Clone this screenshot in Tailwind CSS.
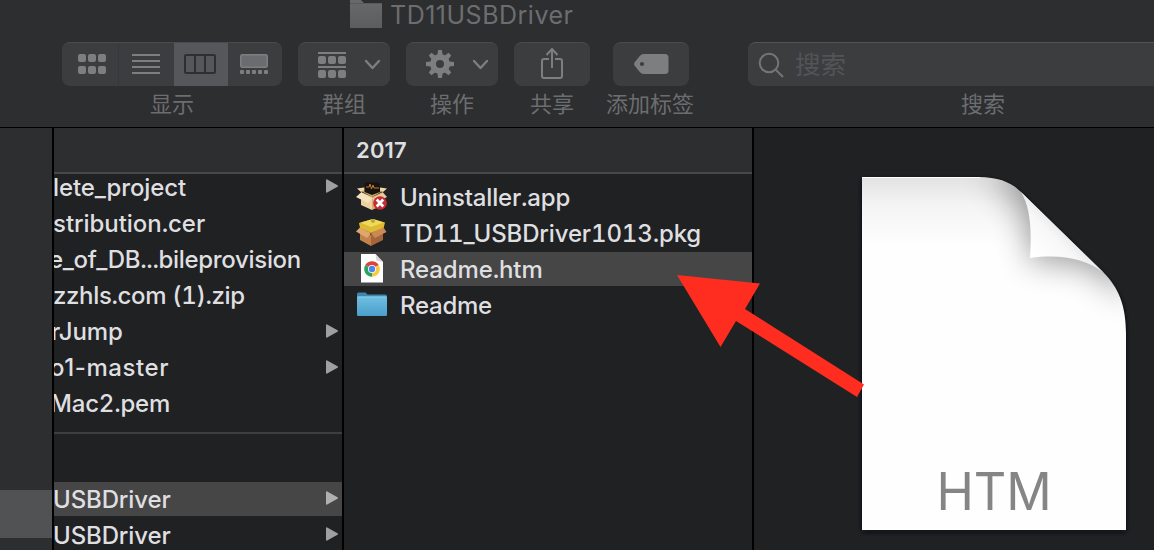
<!DOCTYPE html>
<html lang="zh-CN">
<head>
<meta charset="utf-8">
<title>TD11USBDriver</title>
<script src="https://cdn.jsdelivr.net/npm/@tailwindcss/browser@4"></script>
</head>
<body class="w-[1154px] h-[550px] overflow-hidden bg-[#202123] font-['Inter','Noto_Sans_CJK_SC',sans-serif]">
<div class="relative flex h-[550px] w-[1154px] flex-col overflow-hidden">

  <!-- Toolbar -->
  <header class="h-[128px] shrink-0 border-b border-black bg-[#2d2e30] text-[#6c6d6f]">
    <div class="flex h-[42px] items-start pl-[350px]">
      <svg class="h-[28px] w-[32px] shrink-0" viewBox="0 0 32 28"><defs><linearGradient id="tf" x1="0" y1="0" x2="0" y2="1"><stop offset="0" stop-color="#68696b"/><stop offset="1" stop-color="#5c5d5f"/></linearGradient></defs><path d="M0 0h11l3 3h18v25H0z" fill="url(#tf)"/><path d="M0 3.500h32" stroke="#58595b"/></svg>
      <h1 class="ml-[8px] -mt-px text-[25px] leading-[32px] tracking-[0.500px] whitespace-nowrap">TD11USBDriver</h1>
    </div>
    <div class="flex items-start">
      <div class="ml-[62px] w-[220px]">
        <div class="flex h-[44px] overflow-hidden rounded-[8px] border-t border-[#4a4b4d] bg-[#3c3d3f]">
          <div class="w-[57px] border-r border-[#36373a]"><svg class="h-[43px] w-[56px]" viewBox="0 0 56 43" fill="#7d7e80"><rect x="16" y="11" width="8" height="8" rx="2"/><rect x="26" y="11" width="8" height="8" rx="2"/><rect x="36" y="11" width="8" height="8" rx="2"/><rect x="16" y="23" width="8" height="8" rx="2"/><rect x="26" y="23" width="8" height="8" rx="2"/><rect x="36" y="23" width="8" height="8" rx="2"/></svg></div>
          <div class="w-[55px]"><svg class="h-[43px] w-[55px]" viewBox="0 0 55 43" fill="#7d7e80"><path d="M13 11h28v2H13zM13 17h28v2H13zM13 23h28v2H13zM13 29h28v2H13z"/></svg></div>
          <div class="w-[54px] bg-[#56575a]"><svg class="h-[43px] w-[54px]" viewBox="0 0 54 43" fill="none" stroke="#2e2f31" stroke-width="2"><rect x="11" y="12" width="30" height="18" rx="1"/><path d="M21 12v18M31 12v18"/></svg></div>
          <div class="w-[54px]"><svg class="h-[43px] w-[54px]" viewBox="0 0 54 43" fill="#7d7e80"><rect x="12.750" y="11.750" width="26.500" height="12.500" rx="1.500" fill="#6b6c6f" stroke="#7d7e80" stroke-width="1.500"/><rect x="12" y="27" width="4" height="4" rx="1"/><rect x="18" y="27" width="4" height="4" rx="1"/><rect x="24" y="27" width="4" height="4" rx="1"/><rect x="30" y="27" width="4" height="4" rx="1"/><rect x="36" y="27" width="4" height="4" rx="1"/></svg></div>
        </div>
        <div class="mt-[2px] text-center text-[22px] leading-[32px]">显示</div>
      </div>
      <div class="ml-[16px] w-[92px]">
        <div class="h-[44px] rounded-[8px] border-t border-[#4a4b4d] bg-[#3c3d3f]"><svg class="h-[43px] w-[92px]" viewBox="0 0 92 43" fill="#7d7e80"><path d="M20 9h28v2H20zM20 23h28v2H20z"/><rect x="20" y="13" width="8" height="8" rx="2"/><rect x="30" y="13" width="8" height="8" rx="2"/><rect x="40" y="13" width="8" height="8" rx="2"/><rect x="20" y="27" width="8" height="8" rx="2"/><rect x="30" y="27" width="8" height="8" rx="2"/><rect x="40" y="27" width="8" height="8" rx="2"/><path d="M68 18l6.500 7 6.500-7" fill="none" stroke="#7d7e80" stroke-width="2.400" stroke-linecap="round" stroke-linejoin="round"/></svg></div>
        <div class="mt-[2px] text-center text-[22px] leading-[32px]">群组</div>
      </div>
      <div class="ml-[16px] w-[92px]">
        <div class="h-[44px] rounded-[8px] border-t border-[#4a4b4d] bg-[#3c3d3f]"><svg class="h-[43px] w-[92px]" viewBox="0 0 92 43" fill="none" stroke="#7d7e80"><g transform="translate(34 21)"><circle r="7" stroke-width="6" stroke="#7d7e80"/><g fill="#7d7e80" stroke="none"><path id="t" d="M-2.600-9L-1.900-14H1.900L2.600-9z"/><use href="#t" transform="rotate(45)"/><use href="#t" transform="rotate(90)"/><use href="#t" transform="rotate(135)"/><use href="#t" transform="rotate(180)"/><use href="#t" transform="rotate(225)"/><use href="#t" transform="rotate(270)"/><use href="#t" transform="rotate(315)"/></g></g><path d="M68 18l6.500 7 6.500-7" stroke-width="2.400" stroke-linecap="round" stroke-linejoin="round"/></svg></div>
        <div class="mt-[2px] text-center text-[22px] leading-[32px]">操作</div>
      </div>
      <div class="ml-[16px] w-[76px]">
        <div class="h-[44px] rounded-[8px] border-t border-[#4a4b4d] bg-[#3c3d3f]"><svg class="h-[43px] w-[76px]" viewBox="0 0 76 43" fill="none" stroke="#7d7e80" stroke-width="2"><path d="M35 16h-5a2 2 0 0 0-2 2v15a2 2 0 0 0 2 2h16a2 2 0 0 0 2-2V18a2 2 0 0 0-2-2h-5M38 25V6M32.500 12L38 6l5.500 6"/></svg></div>
        <div class="mt-[2px] text-center text-[22px] leading-[32px]">共享</div>
      </div>
      <div class="ml-[16px] w-[90px]">
        <div class="ml-[7px] h-[44px] w-[76px] rounded-[8px] border-t border-[#4a4b4d] bg-[#3c3d3f]"><svg class="h-[43px] w-[76px]" viewBox="0 0 76 43"><path d="M31 11h21a3.500 3.500 0 0 1 3.500 3.500v13a3.500 3.500 0 0 1-3.500 3.500H31c-2 0-3-.8-4.200-2l-4.500-5.500c-1.600-1.800-1.600-3.200 0-5l4.500-5.500c1.200-1.200 2.200-2 4.200-2z" fill="#7d7e80"/><circle cx="29" cy="21" r="2.100" fill="#3c3d3f"/></svg></div>
        <div class="mt-[2px] text-center text-[22px] leading-[32px] whitespace-nowrap">添加标签</div>
      </div>
      <div class="ml-[54px] w-[470px] shrink-0">
        <div class="flex h-[44px] items-center rounded-[8px] border-t border-[#535456] bg-[#3c3d3f]">
          <svg class="ml-[9px] h-[28px] w-[30px]" viewBox="0 0 30 28" fill="none" stroke="#747577" stroke-width="2"><circle cx="12" cy="12" r="9.300"/><path d="M18.500 18.500l7.500 7.500"/></svg>
          <span class="ml-[8px] text-[25.500px] leading-[40px] text-[#535457]">搜索</span>
        </div>
        <div class="mt-[2px] text-center text-[22px] leading-[32px]">搜索</div>
      </div>
    </div>
  </header>

  <!-- Columns -->
  <main class="flex min-h-0 flex-1 text-[24px] leading-[36px] font-[450] tracking-[-0.120px] text-[#dfdfe0] tabular-nums whitespace-nowrap">
    <aside class="w-[54px] shrink-0 border-r-2 border-black bg-[#2d2e30] pt-[362px]"><div class="h-[48px] bg-[#515254]"></div></aside>

    <section class="w-[290px] shrink-0 overflow-hidden border-r-2 border-black">
      <div class="h-[46px] border-b-2 border-[#47484a] bg-[#2d2e30]"></div>
      <ul class="-mt-[4px]">
        <li class="flex h-[36px] items-center justify-between pr-[4px]"><span class="-ml-px">lete_project</span><svg class="mb-[4px] h-[14px] w-[12px]" viewBox="0 0 12 14"><path d="M0 1.200Q0 0 1.200.5L11.500 6.200q1 .8 0 1.600L1.200 13.500Q0 14 0 12.800z" fill="#a0a0a1"/></svg></li>
        <li class="h-[36px]"><span class="-ml-px tracking-[-0.050px]">stribution.cer</span></li>
        <li class="h-[36px]"><span class="-ml-[5px] tracking-[-0.320px]">e_of_DB...bileprovision</span></li>
        <li class="h-[36px]"><span class="-ml-px tracking-[-0.360px]">zzhls.com (1).zip</span></li>
        <li class="flex h-[36px] items-center justify-between pr-[4px]"><span class="-ml-[3px]">rJump</span><svg class="mb-[3px] h-[14px] w-[12px]" viewBox="0 0 12 14"><path d="M0 1.200Q0 0 1.200.5L11.500 6.200q1 .8 0 1.600L1.200 13.500Q0 14 0 12.800z" fill="#a0a0a1"/></svg></li>
        <li class="flex h-[36px] items-center justify-between pr-[4px]"><span class="-ml-[4px] tracking-[0.560px] proportional-nums">o1-master</span><svg class="mb-[3px] h-[14px] w-[12px]" viewBox="0 0 12 14"><path d="M0 1.200Q0 0 1.200.5L11.500 6.200q1 .8 0 1.600L1.200 13.500Q0 14 0 12.800z" fill="#a0a0a1"/></svg></li>
        <li class="h-[36px]"><span class="-ml-[4px] tracking-[-0.200px]">Mac2.pem</span></li>
      </ul>
      <div class="mt-[10px] h-[2px] bg-[#3e3f41]"></div>
      <ul class="mt-[48px]">
        <li class="mb-[2px] flex h-[34px] items-center justify-between bg-[#464646] pr-[4px]"><span class="-ml-px pt-[2px]">USBDriver</span><svg class="mb-[2px] h-[14px] w-[12px]" viewBox="0 0 12 14"><path d="M0 1.200Q0 0 1.200.5L11.500 6.200q1 .8 0 1.600L1.200 13.500Q0 14 0 12.800z" fill="#b0b0b0"/></svg></li>
        <li class="flex h-[34px] items-center justify-between pr-[4px]"><span class="-ml-px pt-[2px]">USBDriver</span><svg class="mb-[2px] h-[14px] w-[12px]" viewBox="0 0 12 14"><path d="M0 1.200Q0 0 1.200.5L11.500 6.200q1 .8 0 1.600L1.200 13.500Q0 14 0 12.800z" fill="#a0a0a1"/></svg></li>
      </ul>
    </section>

    <section class="w-[410px] shrink-0 border-r-2 border-black">
      <div class="h-[46px] border-b-2 border-[#47484a] bg-[#2d2e30] pl-[12px] text-[22px] leading-[44px] font-semibold tracking-[0.200px] proportional-nums">2017</div>
      <ul class="flex flex-col gap-[2px] pt-[6px]">
        <li class="flex h-[34px] items-center pl-[12px]">
          <svg class="h-[32px] w-[32px]" viewBox="0 0 32 32"><path d="M5 10l4-4h14l4 4-11 6z" fill="#c9a46b"/><path d="M5 11l11 5v13L5 24z" fill="#edd2a0"/><path d="M27 11l-11 5v13l11-5z" fill="#d7ae74"/><path d="M8.500 3l1-1.500h13L24 3v8l-8 3-7.500-3z" fill="#171310"/><path d="M10 6h3l1-3 1.500 5L17 4l1 3h5" fill="none" stroke="#c87932"/><path d="M5 11.500l11 6-4 4.500L0 16z" fill="#f5e3bd"/><path d="M27 11.500l-11 6 4 4L31 16z" fill="#e9cd99"/><path d="M1 7.500l7-1v2.500l-3 2zM31 7.500l-7-1v2.500l3 2z" fill="#f2d9a8"/><circle cx="24" cy="22" r="6.800" fill="#c92b32"/><path d="M20.700 18.500l6.500 7M27.200 18.500l-6.500 7" stroke="#fff" stroke-width="2.700"/></svg>
          <span class="ml-[12px] pt-[2px] tracking-[-0.180px]">Uninstaller.app</span>
        </li>
        <li class="flex h-[34px] items-center pl-[12px]">
          <svg class="h-[32px] w-[32px]" viewBox="0 0 32 32"><path d="M4 12l11 6v11L4 23z" fill="#c2824c"/><path d="M27 11l-12 6v12l12-6z" fill="#a5653a"/><path d="M3 6l14-4 12 3.500-1.500 6L15 16 4 11z" fill="#dfba33"/><path d="M4.500 5.500L17 2l10.500 3.500L15 10z" fill="#f0d95a"/><path d="M4 10.500l11 5.500-4 5L0 14.500z" fill="#dfa76e"/><path d="M27.500 10.500L15 16l4 5 11.500-6z" fill="#cb8a55"/><circle cx="17" cy="4" r="2" fill="#b6a72e"/></svg>
          <span class="ml-[12px] pt-[2px] tracking-[-0.140px]">TD11_USBDriver1013.pkg</span>
        </li>
        <li class="flex h-[34px] items-center bg-[#464646] pl-[12px]">
          <svg class="h-[32px] w-[32px]" viewBox="0 0 32 32"><path d="M5 1h14.500l7.500 8v20.500H5z" fill="#fff"/><path d="M19.500 1l1 6.500 6.500 1.500z" fill="#d5d5d5"/><path d="M16 16L9.250 12.100A7.800 7.800 0 0 1 22.750 12.100z" fill="#dc4437"/><path d="M16 16L22.750 12.100A7.800 7.800 0 0 1 16 23.800z" fill="#fbcb3c"/><path d="M16 16v7.800A7.800 7.800 0 0 1 9.250 12.100z" fill="#2da25a"/><circle cx="16" cy="16" r="4" fill="#fff"/><circle cx="16" cy="16" r="3.200" fill="#4c86ee"/></svg>
          <span class="ml-[12px] pt-[2px]">Readme.htm</span>
        </li>
        <li class="flex h-[34px] items-center pl-[12px]">
          <svg class="h-[32px] w-[32px]" viewBox="0 0 32 32"><defs><linearGradient id="bf" x1="0" y1="0" x2="0" y2="1"><stop offset="0" stop-color="#6fbfe3"/><stop offset="1" stop-color="#4a9fca"/></linearGradient></defs><path d="M1 5q0-1.500 1.500-1.500h7l2 2H29q2 0 2 1.500v4H1z" fill="#3e86ac"/><rect x="1" y="7.500" width="30" height="19.500" rx="1.200" fill="url(#bf)"/><path d="M1.500 8h29" stroke="#87cbe8"/></svg>
          <span class="ml-[12px] pt-[2px] tracking-[-0.250px]">Readme</span>
        </li>
      </ul>
    </section>

    <section class="relative flex-1 pl-[98px] pt-[39px]">
      <svg class="h-[383px] w-[292px]" viewBox="852 167 292 383">
        <defs>
          <linearGradient id="top" x1="0" y1="0" x2="0" y2="1"><stop offset="0" stop-color="#000" stop-opacity=".11"/><stop offset=".4" stop-color="#000" stop-opacity=".04"/><stop offset="1" stop-color="#000" stop-opacity="0"/></linearGradient>
          <linearGradient id="curl" gradientUnits="userSpaceOnUse" x1="1032" y1="256" x2="1068" y2="220"><stop offset="0" stop-color="#fff"/><stop offset=".55" stop-color="#f8f8f8"/><stop offset="1" stop-color="#dedede"/></linearGradient>
          <filter id="soft" x="-50%" y="-50%" width="200%" height="200%"><feGaussianBlur stdDeviation="16"/></filter>
          <filter id="shadow" x="-10%" y="-10%" width="120%" height="120%"><feGaussianBlur stdDeviation="2.500"/></filter>
          <clipPath id="page"><path d="M862 177H978C1003 177 1015 185 1025 196L1103 272C1119 288 1126 306 1126 334V530H862z"/></clipPath>
        </defs>
        <path d="M862 179H978C1003 179 1015 187 1025 198L1103 274C1119 290 1126 308 1126 336V532H862z" fill="#101112" filter="url(#shadow)"/>
        <g clip-path="url(#page)">
          <path d="M862 177h264v353H862z" fill="#fefefe"/>
          <path d="M862 177h264v70H862z" fill="url(#top)"/>
          <path d="M985 177C1022 192 1032 220 1030 262C1060 260 1085 262 1102 275L1126 300V160z" fill="#000" opacity=".4" filter="url(#soft)"/>
          <path d="M862 177.500h118" stroke="#fff"/>
        </g>
        <path d="M1021 192C1030 207 1032 228 1030 258C1060 254 1085 258 1104 273z" fill="url(#curl)"/>
        <text x="994" y="510" text-anchor="middle" font-family="Inter, sans-serif" font-size="52" font-weight="400" fill="#858585" textLength="115" lengthAdjust="spacingAndGlyphs">HTM</text>
      </svg>
    </section>
  </main>

  <!-- Pointer arrow laid over the columns -->
  <svg class="absolute left-[670px] top-[260px] h-[145px] w-[200px]" viewBox="670 260 200 145"><path d="M677 275L760 283.500L745 309L864 384.500L857 397L736 321L720.500 347z" fill="#ff2d1f"/></svg>
</div>
</body>
</html>
